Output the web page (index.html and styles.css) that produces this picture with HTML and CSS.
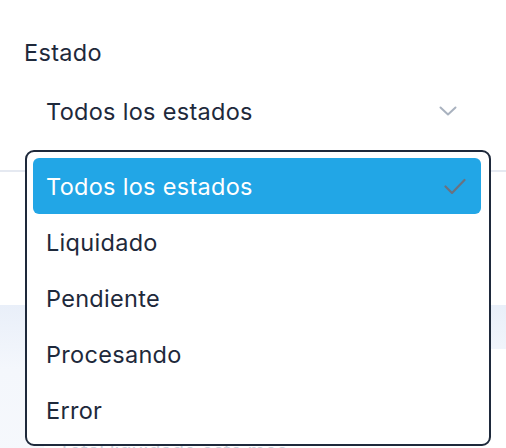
FILE: index.html
```html
<!DOCTYPE html>
<html lang="es">
<head>
<meta charset="utf-8">
<link rel="stylesheet" href="styles.css">
</head>
<body>
<div class="page">
  <section class="filter">
    <label class="label">Estado</label>
    <div class="trigger">
      <span class="trigger-text">Todos los estados</span>
      <svg class="chevron" width="18" height="10" viewBox="0 0 18 10"><path d="M1.5 1.5l7.5 7 7.5-7" fill="none" stroke="#a9b2bf" stroke-width="2" stroke-linecap="round" stroke-linejoin="round"/></svg>
    </div>
  </section>
  <div class="divider"></div>
  <div class="middle"></div>
  <section class="lower">
    <div class="card">
      <div class="card-line">Total liquidado este mes</div>
    </div>
  </section>

  <ul class="menu">
    <li class="option selected">
      <span>Todos los estados</span>
      <svg class="check" width="22" height="16" viewBox="0 0 22 16"><path d="M1.5 8.5l6.5 6.5 12.5-13" fill="none" stroke="#6b7280" stroke-width="2.2" stroke-linecap="round" stroke-linejoin="round"/></svg>
    </li>
    <li class="option">Liquidado</li>
    <li class="option">Pendiente</li>
    <li class="option">Procesando</li>
    <li class="option">Error</li>
  </ul>
</div>
</body>
</html>
```
FILE: styles.css
```css
* { box-sizing: border-box; }
html, body { margin: 0; padding: 0; }
body {
  background: #ffffff;
  font-family: Inter, "Noto Sans", sans-serif;
  color: #1e293b;
  width: 506px;
  height: 448px;
  overflow: hidden;
}
.page {
  position: relative;
  width: 506px;
  height: 448px;
  overflow: hidden;
}
.filter {
  padding: 38px 25px 0 24px;
  height: 170px;
}
.label {
  display: block;
  font-size: 23.5px;
  line-height: 30px;
  letter-spacing: 0.3px;
  color: #1e293b;
}
.trigger {
  margin-top: 28px;
  display: flex;
  align-items: center;
  justify-content: space-between;
  padding: 0 24px 0 22px;
  height: 30px;
}
.trigger-text {
  font-size: 23.5px;
  letter-spacing: 0.3px;
  color: #1e293b;
}
.chevron { display: block; }
.divider {
  height: 2px;
  background: #e5e9f1;
}
.middle {
  height: 133px;
  background: #ffffff;
}
.lower {
  height: 160px;
  background: linear-gradient(180deg, #e9eff9 0%, #f4f7fc 40%, #f6f8fc 100%);
  padding: 44px 0 0 44px;
}
.card {
  background: #ffffff;
  border-radius: 40px 40px 0 0;
  height: 200px;
  padding: 90px 0 0 14px;
  margin-right: -40px;
}
.card-line {
  font-size: 20px;
  color: #cbd2dc;
}
.menu {
  position: absolute;
  left: 25px;
  top: 150px;
  width: 466px;
  height: 296px;
  margin: 0;
  padding: 6px 8px 7px 6px;
  list-style: none;
  background: #ffffff;
  border: 2px solid #1e293b;
  border-radius: 9px;
}
.option {
  display: flex;
  align-items: center;
  justify-content: space-between;
  height: 56px;
  padding: 0 15px 0 13px;
  font-size: 23.5px;
  letter-spacing: 0.3px;
  color: #1e293b;
  border-radius: 6px;
}
.option.selected {
  background: #22a6e6;
  color: #ffffff;
}
.check { display: block; }
```
